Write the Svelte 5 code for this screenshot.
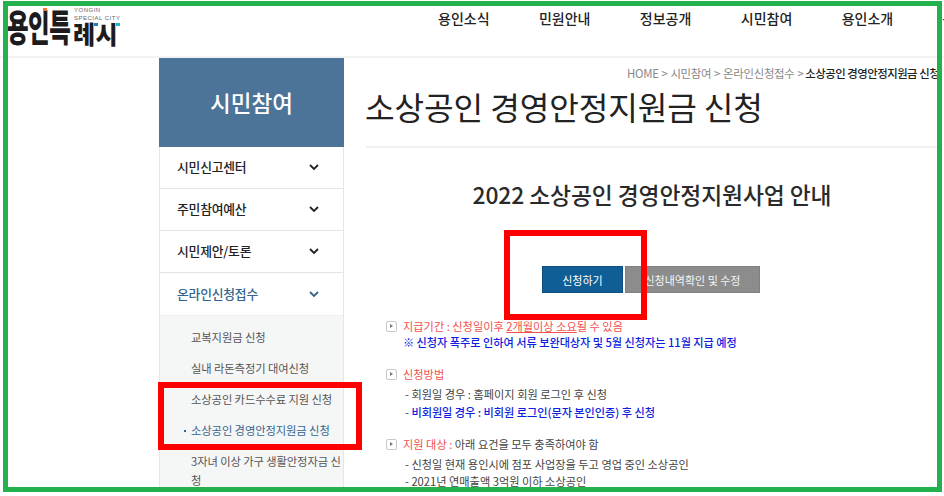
<script>
  const nav = ['용인소식', '민원안내', '정보공개', '시민참여', '용인소개', '분야별정보'];
  const menu = ['시민신고센터', '주민참여예산', '시민제안/토론'];
  const subs = ['교복지원금 신청', '실내 라돈측정기 대여신청', '소상공인 카드수수료 지원 신청'];
</script>

<div class="page">
  <header class="top">
    <div class="logo">
      <span class="logo-tall">용인특</span><span class="logo-low">례시</span>
      <span class="logo-en">YONGIN<br />SPECIAL CITY</span>
      <i class="dot orange"></i><i class="dot blue-dot"></i><i class="dot cyan"></i>
    </div>
    <nav class="nav">
      {#each nav as n}<span>{n}</span>{/each}
    </nav>
  </header>

  <div class="body">
    <aside class="side">
      <div class="side-title">시민참여</div>
      {#each menu as m}
        <div class="item">
          <span>{m}</span>
          <svg width="10" height="7" viewBox="0 0 10 7"><path d="M1 1l4 4 4-4" fill="none" stroke="#222" stroke-width="1.8" /></svg>
        </div>
      {/each}
      <div class="item open">
        <span>온라인신청접수</span>
        <svg width="10" height="7" viewBox="0 0 10 7"><path d="M1 1l4 4 4-4" fill="none" stroke="#35648c" stroke-width="1.8" /></svg>
      </div>
      <ul class="subs">
        {#each subs as s}<li>{s}</li>{/each}
        <li class="cur">소상공인 경영안정지원금 신청</li>
        <li class="wrap">3자녀 이상 가구 생활안정자금 신청</li>
      </ul>
    </aside>

    <main class="main">
      <div class="crumb">HOME &gt; 시민참여 &gt; 온라인신청접수 &gt; <b>소상공인 경영안정지원금 신청</b></div>
      <h1>소상공인 경영안정지원금 신청</h1>
      <h2>2022 소상공인 경영안정지원사업 안내</h2>
      <div class="btns">
        <button class="blue">신청하기</button>
        <button class="gray">신청내역확인 및 수정</button>
      </div>

      <section class="block first">
        <p class="head"><i class="mark"></i><span class="red">지급기간 : 신청일이후 <u>2개월이상 소요</u>될 수 있음</span></p>
        <p class="note"><span class="blue-t">※ 신청자 폭주로 인하여 서류 보완대상자 및 5월 신청자는 11월 지급 예정</span></p>
      </section>
      <section class="block second">
        <p class="head"><i class="mark"></i><span class="red">신청방법</span></p>
        <p class="line l1">- 회원일 경우 : 홈페이지 회원 로그인 후 신청</p>
        <p class="line l2">- <b class="blue-t">비회원일 경우 : 비회원 로그인(문자 본인인증) 후 신청</b></p>
      </section>
      <section class="block third">
        <p class="head"><i class="mark"></i><span class="red">지원 대상 :</span> 아래 요건을 모두 충족하여야 함</p>
        <p class="line l1">- 신청일 현재 용인시에 점포 사업장을 두고 영업 중인 소상공인</p>
        <p class="line">- 2021년 연매출액 3억원 이하 소상공인</p>
      </section>
    </main>
  </div>

  <div class="frame"></div>
  <div class="mark-red r1"></div>
  <div class="mark-red r2"></div>
</div>

<style>
  :global(body) { margin: 0; background: #fff; }
  .page {
    position: relative; width: 944px; height: 496px; overflow: hidden; background: #fff;
    font-family: "Noto Sans CJK KR", "Noto Sans", sans-serif; color: #333;
  }
  .top { height: 56px; border-bottom: 2px solid #f2f2f2; position: relative; display: flex; }
  .logo { position: absolute; left: 7px; top: 7px; width: 114px; height: 38px; }
  .logo-tall, .logo-low {
    position: absolute; font-weight: 900; color: #1c1c1e; white-space: nowrap;
  }
  .logo-tall { left: 0; bottom: 0; font-size: 23.5px; line-height: 23.5px; letter-spacing: -.5px; transform: scaleY(1.58); transform-origin: left bottom; }
  .logo-low { left: 66px; bottom: 1px; font-size: 24px; line-height: 21px; letter-spacing: .5px; transform: scaleY(1.05); transform-origin: left bottom; }
  .logo-en {
    position: absolute; left: 67px; top: 0; font: 6px/7.5px "Liberation Sans", sans-serif;
    letter-spacing: .5px; color: #666;
  }
  .dot { position: absolute; width: 4px; height: 3px; }
  .orange { left: 36px; top: 1px; background: #f47a3c; }
  .blue-dot { left: 87px; top: 16px; background: #1f7fc4; }
  .cyan { left: 109px; top: 16px; background: #16b8cc; }
  .nav { margin-left: 438px; display: flex; gap: 49.4px; padding-top: 7px; font-size: 14px; line-height: 22px; color: #222; white-space: nowrap; }
  .nav span { font-weight: 500; }
  .body { display: flex; padding-left: 159px; }
  .side { width: 185px; flex: none; box-sizing: border-box; border: solid #e6e6e6; border-width: 0 1px; }
  .side-title {
    height: 87px; padding-bottom: 2px; margin: 0 -1px; background: #4c7499; color: #fff; font-size: 22.5px; font-weight: 500;
    display: flex; align-items: center; justify-content: center;
  }
  .item {
    height: 41px; border-bottom: 1.5px solid #e4e4e4; display: flex; align-items: center;
    justify-content: space-between; padding: 0 24px 0 17px; font-size: 12.8px; font-weight: 500; color: #222; letter-spacing: -.2px;
  }
  .item span { margin-top: -2px; }
  .item.open { color: #35648c; height: 42px; border-bottom: 0; }
  .subs { list-style: none; margin: 0; padding: 6px 0 0 31px; background: #f5f6f6; font-size: 11.3px; color: #555; letter-spacing: -.1px; border-top: 1px solid #eee; }
  .subs li { height: 31px; line-height: 31px; position: relative; white-space: nowrap; }
  .subs .cur { color: #35648c; }
  .subs .cur::before { content: ""; position: absolute; left: -7px; top: 15px; width: 2px; height: 2px; background: #35648c; }
  .subs .wrap { white-space: normal; height: auto; line-height: 19px; padding-top: 6px; width: 152px; }
  .main { margin-left: 22px; width: 572px; flex: none; position: relative; white-space: nowrap; }
  .crumb { height: 21px; margin-top: 6px; padding-left: 261px; font-size: 11.4px; line-height: 19px; color: #888; letter-spacing: -.25px; word-spacing: .5px; }
  .crumb b { color: #222; font-weight: 500; letter-spacing: -.5px; word-spacing: 0; margin-left: -1px; }
  h1 {
    margin: 0; height: 61px; font-size: 32.2px; line-height: 42px; font-weight: 400; color: #222;
    border-bottom: 2px solid #f0f0f0; letter-spacing: -.1px; text-indent: -1px;
  }
  h2 { margin: 31px 0 0; font-size: 22.8px; line-height: 32px; font-weight: 500; color: #2a2a2a; text-align: center; letter-spacing: -.1px; }
  .btns { margin: 55px 0 0 176px; display: flex; gap: 2px; }
  button {
    height: 27px; padding: 0; border: 1px solid; font: 400 11px "Noto Sans CJK KR", sans-serif; color: #fff; border-radius: 0;
  }
  .blue { width: 81px; background: #105e96; border-color: #0c4f82; }
  .gray { width: 135px; background: #8c8c8c; border-color: #808080; color: #f4f4f4; }
  p { margin: 0; font-size: 11.2px; line-height: 17px; color: #444; }
  .block { margin-left: 20px; padding-left: 17px; position: relative; }
  .first { margin-top: 25px; }
  .second { margin-top: 15px; }
  .third { margin-top: 15px; }
  .head { position: relative; }
  .mark {
    position: absolute; left: -17px; top: 3px; width: 9px; height: 9px; border: 1px solid #c8c8c8; border-radius: 2px; background: #fff;
  }
  .mark::after {
    content: ""; position: absolute; left: 3px; top: 2px; border-left: 3px solid #777; border-top: 2.5px solid transparent; border-bottom: 2.5px solid transparent;
  }
  .red { color: #f24f4f; }
  .blue-t { color: #0f1fe0; font-weight: 500; }
  .note { margin-top: -1px; letter-spacing: -.05px; }
  .line { padding-left: 2px; }
  .line b { letter-spacing: -.05px; }
  .l1 { margin-top: 3px; }
  .l2 { margin-top: 1px; }
  .frame { position: absolute; left: 3px; top: 1px; width: 939px; height: 491px; box-sizing: border-box; border: 5px solid #22b14c; pointer-events: none; }
  .mark-red { position: absolute; box-sizing: border-box; border: 6px solid #ff0000; pointer-events: none; }
  .r1 { left: 504px; top: 230px; width: 143px; height: 90px; }
  .r2 { left: 158px; top: 382px; width: 204px; height: 68px; }
</style>
